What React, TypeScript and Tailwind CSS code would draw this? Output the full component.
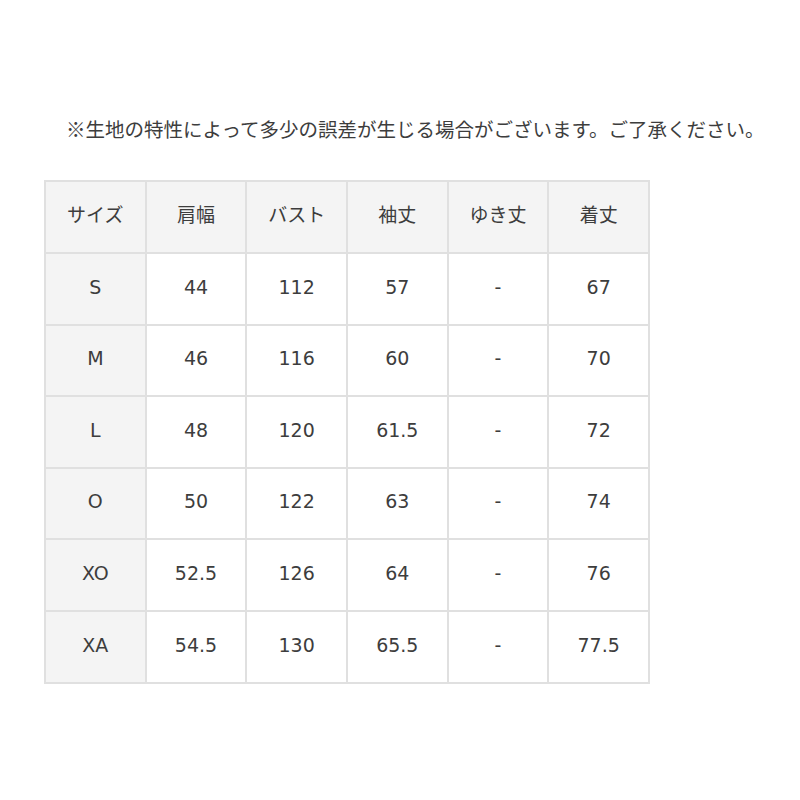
import React from 'react';

const headers = ['サイズ', '肩幅', 'バスト', '袖丈', 'ゆき丈', '着丈'];

const rows = [
  ['S', '44', '112', '57', '-', '67'],
  ['M', '46', '116', '60', '-', '70'],
  ['L', '48', '120', '61.5', '-', '72'],
  ['O', '50', '122', '63', '-', '74'],
  ['XO', '52.5', '126', '64', '-', '76'],
  ['XA', '54.5', '130', '65.5', '-', '77.5'],
];

const App: React.FC = () => {
  return (
    <div
      className="w-[800px] h-[800px] bg-white text-[#3d3d3d] pt-[114px]"
      style={{ fontFamily: '"Noto Sans CJK JP", "Noto Sans", sans-serif' }}
    >
      <p className="ml-[66px] text-[19.5px] leading-[30px] whitespace-nowrap">
        ※生地の特性によって多少の誤差が生じる場合がございます。ご了承ください。
      </p>

      <table
        className="ml-[44px] mt-[36px] w-[606px] border-collapse table-fixed text-[19px]"
        style={{ fontFamily: '"DejaVu Sans", "Noto Sans CJK JP", sans-serif' }}
      >
        <thead>
          <tr className="h-[72px] bg-[#f4f4f4]">
            {headers.map((h) => (
              <th key={h} className="border-2 border-[#e0e0e0] font-normal text-center align-middle pb-[4px]">
                {h}
              </th>
            ))}
          </tr>
        </thead>
        <tbody>
          {rows.map((r) => (
            <tr key={r[0]} className="h-[71.6px]">
              {r.map((c, i) => (
                <td
                  key={i}
                  className={
                    'border-2 border-[#e0e0e0] text-center align-middle pb-[4px] ' +
                    (i === 0 ? 'bg-[#f4f4f4]' : 'bg-white')
                  }
                >
                  {c}
                </td>
              ))}
            </tr>
          ))}
        </tbody>
      </table>
    </div>
  );
};

export default App;
